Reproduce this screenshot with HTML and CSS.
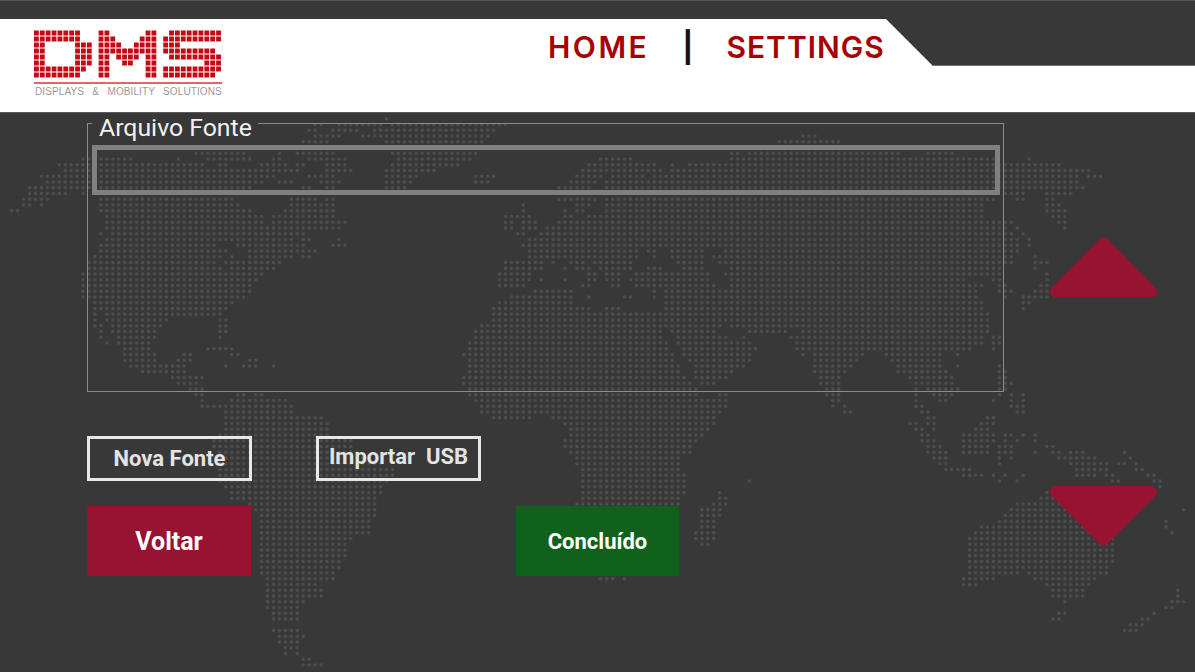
FILE: index.html
```html
<!DOCTYPE html>
<html lang="en">
<head>
  <meta charset="UTF-8" />
  <meta name="viewport" content="width=device-width, initial-scale=1.0" />
  <title>Arquivo Fonte - DMS</title>
  <link rel="stylesheet" href="styles.css">
</head>
<body>

  <!-- Header -->
  <header class="header">
    <div class="logo">
      <svg class="logo-mark" viewBox="0 0 32 8" preserveAspectRatio="none" aria-label="DMS">
        <path d="M0 .5H8M11 .5H13M19 .5H21M23 .5H32
                 M0 1.5H8M11 1.5H14M18 1.5H21M22 1.5H32
                 M0 2.5H2M7 2.5H10M11 2.5H15M17 2.5H21M22 2.5H25
                 M0 3.5H2M7 3.5H10M11 3.5H13M13 3.5H16M16 3.5H19M19 3.5H21M22 3.5H31
                 M0 4.5H2M7 4.5H10M11 4.5H13M14 4.5H18M19 4.5H21M23 4.5H32
                 M0 5.5H2M7 5.5H10M11 5.5H13M15 5.5H17M19 5.5H21M29 5.5H32
                 M0 6.5H9M11 6.5H13M19 6.5H21M22 6.5H32
                 M0 7.5H8M11 7.5H13M19 7.5H21M22 7.5H31"/>
      </svg>
      <div class="logo-text">DISPLAYS  &amp;  MOBILITY  SOLUTIONS</div>
    </div>
    <nav class="navbar">
      <a class="nav-home" href="#">HOME</a>
      <span class="nav-sep">|</span>
      <a href="#">SETTINGS</a>
    </nav>
    <div class="notch"></div>
  </header>

  <!-- Page -->
  <main class="page">

    <!-- Dotted world map, one subpath per run of dots, in grid units -->
    <svg class="world-map" width="1195" height="560" viewBox="0 0 1195 560">
      <g transform="translate(11.67 6.7) scale(5.95 5.75)">
        <path d="M63 0h.1
M51 1H52.1M55 1H62.1M64 1H83.1
M50 2H51.1M54 2H58.1M61 2H81.1
M51 3H55.1M59 3H80.1M133 3H135.1
M49 4H53.1M63 4H79.1M129 4H139.1
M31 6H39.1M45 6h.1M48 6H54.1M64 6H78.1M121 6H122.1M124 6H149.1M154 6H158.1
M12 7H20.1M28 7h.1M33 7H40.1M44 7H45.1M50 7H56.1M65 7H77.1M99 7H104.1M121 7H165.1M171 7h.1
M8 8H32.1M35 8H36.1M42 8H46.1M48 8H49.1M53 8H56.1M64 8H75.1M97 8H108.1M111 8h.1M114 8H176.1
M9 9H48.1M53 9H57.1M63 9H71.1M96 9H109.1M111 9H181.1
M5 10H44.1M50 10H54.1M63 10H68.1M78 10H81.1M95 10H99.1M101 10H106.1M108 10H179.1M181 10H183.1
M6 11H42.1M45 11H47.1M52 11H55.1M63 11H67.1M78 11H80.1M94 11H98.1M100 11H179.1
M3 12H40.1M49 12H50.1M53 12H54.1M63 12H66.1M92 12H97.1M100 12H180.1
M3 13H9.1M12 13h.1M167 13H170.1M174 13H178.1
M2 14H6.1M15 14H37.1M47 14H51.1M53 14H54.1M92 14H98.1M100 14H165.1M169 14H170.1M174 14H175.1
M2 15H3.1M5 15h.1M15 15H38.1M47 15H54.1M86 15h.1M95 15H97.1M100 15H163.1M174 15H176.1
M0 16H1.1M15 16H40.1M46 16H54.1M86 16h.1M93 16h.1M95 16H96.1M100 16H163.1M174 16H177.1
M16 17H42.1M44 17H54.1M83 17H87.1M93 17H94.1M97 17H163.1M175 17H177.1
M16 18H42.1M44 18H56.1M83 18H84.1M86 18H88.1M92 18H168.1M176 18H177.1
M16 19H55.1M83 19H84.1M86 19H88.1M90 19H167.1M169 19h.1M177 19h.1
M15 20h.1M17 20H49.1M85 20H86.1M89 20H168.1M170 20h.1
M16 21H47.1M49 21H50.1M55 21h.1M87 21H169.1M171 21h.1
M15 22H34.1M38 22H49.1M54 22H56.1M86 22H169.1M171 22h.1
M15 23H36.1M40 23H51.1M87 23H105.1M107 23H108.1M111 23H116.1M120 23H169.1
M14 24H35.1M37 24h.1M40 24H47.1M49 24H50.1M87 24H105.1M108 24h.1M111 24H116.1M118 24H168.1M172 24h.1
M13 25H34.1M36 25H45.1M83 25H89.1M91 25h.1M94 25H96.1M98 25H104.1M112 25H116.1M119 25H168.1M172 25H174.1
M13 26H35.1M37 26H44.1M83 26H89.1M93 26h.1M95 26H97.1M99 26H104.1M107 26H109.1M113 26H116.1M121 26H166.1M172 26h.1
M12 27H42.1M82 27H87.1M97 27H98.1M100 27H102.1M105 27H117.1M120 27H166.1M174 27h.1
M12 28H41.1M82 28H87.1M89 28h.1M93 28h.1M97 28H98.1M100 28H102.1M104 28H117.1M121 28H160.1M165 28H166.1M174 28h.1
M12 29H40.1M82 29H86.1M96 29H97.1M101 29H102.1M105 29H118.1M121 29H163.1M166 29H167.1M173 29H174.1
M12 30H40.1M88 30H94.1M108 30h.1M110 30H162.1M166 30H168.1M172 30H174.1
M12 31H39.1M84 31H94.1M97 31h.1M103 31H104.1M108 31h.1M110 31H162.1M167 31h.1M170 31H174.1
M14 32H37.1M82 32H94.1M110 32H163.1M170 32H171.1
M14 33H36.1M81 33H97.1M100 33H102.1M110 33H163.1M170 33h.1
M14 34h.1M16 34H35.1M81 34H164.1
M14 35h.1M16 35H26.1M35 35H36.1M81 35H164.1
M14 36H15.1M17 36H25.1M35 36H36.1M79 36H119.1M121 36H164.1
M15 37h.1M17 37H24.1M35 37H36.1M78 37H109.1M111 37H118.1M124 37H130.1M133 37H164.1
M15 38h.1M18 38H24.1M35 38h.1M78 38H109.1M112 38H120.1M123 38h.1M131 38H163.1M165 38H166.1
M16 39h.1M18 39H23.1M77 39H110.1M112 39H124.1M132 39H163.1M165 39H166.1
M19 40H23.1M33 40H37.1M77 40H110.1M113 40H125.1M132 40H161.1M165 40h.1
M19 41H24.1M29 41H30.1M37 41H38.1M76 41H111.1M113 41H124.1M133 41h.1M135 41H143.1M147 41H156.1M159 41h.1
M19 42H24.1M28 42H30.1M40 42H41.1M77 42H111.1M114 42H124.1M135 42H142.1M148 42H156.1
M20 43H29.1M36 43h.1M39 43H41.1M44 43h.1M77 43H112.1M115 43H123.1M135 43H141.1M149 43H156.1M159 43h.1M166 43h.1
M22 44H29.1M77 44H112.1M115 44H121.1M135 44H140.1M149 44H157.1M166 44H167.1
M27 45H32.1M76 45H113.1M115 45H120.1M136 45H139.1M151 45H158.1M166 45H167.1
M28 46H31.1M76 46H114.1M116 46H118.1M136 46H139.1M152 46H158.1M166 46H168.1
M30 47H32.1M77 47H115.1M137 47H139.1M152 47h.1M154 47H159.1M166 47H167.1
M31 48H32.1M38 48H39.1M41 48H42.1M77 48H115.1M119 48H120.1M137 48H139.1M152 48h.1M155 48H158.1M166 48h.1M168 48h.1M170 48h.1
M32 49h.1M37 49H46.1M78 49H120.1M138 49H139.1M152 49h.1M156 49H157.1M165 49h.1M168 49h.1M170 49h.1
M32 50H47.1M79 50H120.1M138 50h.1M140 50h.1M152 50H153.1M168 50H170.1
M36 51H47.1M79 51H119.1M140 51H141.1M153 51H154.1M169 51H170.1
M36 52H52.1M81 52H87.1M91 52H118.1M154 52H155.1M164 52H165.1
M36 53H53.1M93 53H118.1M151 53H152.1M154 53H155.1M163 53H165.1
M36 54H53.1M94 54H117.1M152 54H153.1M155 54h.1M162 54H164.1
M35 55H53.1M94 55H116.1M153 55H154.1M160 55H165.1M167 55H168.1M170 55h.1M172 55h.1
M34 56H57.1M93 56H115.1M153 56H155.1M160 56H165.1M167 56h.1M169 56h.1M172 56h.1
M34 57H57.1M93 57H114.1M154 57H156.1M160 57H164.1M166 57H168.1M174 57H175.1
M35 58H58.1M94 58H114.1M154 58H157.1M160 58H164.1M166 58H168.1M172 58h.1M175 58H176.1M178 58H180.1M187 58h.1
M35 59H60.1M95 59H112.1M155 59H157.1M166 59h.1M168 59h.1M176 59H182.1M188 59h.1
M35 60H62.1M95 60H112.1M156 60H157.1M166 60h.1M178 60H184.1M186 60H187.1M189 60h.1
M35 61H64.1M96 61H112.1M157 61H161.1M179 61H184.1M189 61H190.1
M35 62H64.1M96 62H113.1M160 62H163.1M165 62h.1M167 62h.1M170 62h.1M179 62H182.1M184 62H185.1M191 62H192.1
M35 63H63.1M96 63H113.1M124 63h.1M166 63h.1M169 63h.1M185 63H186.1M192 63H193.1
M36 64H62.1M96 64H113.1M193 64h.1
M37 65H62.1M96 65H113.1M119 65h.1M174 65h.1
M37 66H61.1M96 66H112.1M119 66H120.1M173 66H176.1
M40 67H61.1M95 67H112.1M118 67H120.1M169 67H178.1
M41 68H61.1M116 68H119.1M168 68H179.1M197 68h.1
M42 69H61.1M116 69H119.1M167 69H180.1
M42 70H60.1M116 70H118.1M166 70H181.1M194 70h.1
M42 71H60.1M116 71H118.1M163 71H182.1M194 71h.1
M42 72H60.1M115 72H118.1M162 72H183.1M195 72h.1
M42 73H57.1M115 73H118.1M161 73H185.1
M42 74H56.1M116 74H117.1M161 74H185.1
M42 75H56.1M161 75H185.1
M42 76H56.1M161 76H185.1
M42 77H55.1M161 77H185.1
M42 78H55.1M161 78H184.1
M42 79H54.1M161 79H169.1M171 79H184.1
M43 80H54.1M99 80H101.1M103 80h.1M160 80H165.1M172 80H182.1
M43 81H51.1M160 81H162.1M174 81H181.1
M43 82H52.1M175 82H180.1M196 82h.1
M43 83H52.1M175 83H180.1M196 83h.1
M43 84H49.1M177 84h.1M195 84H197.1
M43 85H48.1M194 85H195.1
M44 86H48.1M176 86H177.1M192 86h.1
M44 87H48.1M175 87H176.1M190 87H191.1
M188 88H190.1
M44 89H48.1M187 89H189.1
M45 90H49.1
M45 91H48.1
M46 92H48.1
M46 93h.1M48 93h.1
M49 94H50.1
M49 95H52.1"/>
      </g>
    </svg>

    <div class="panel">
      <fieldset class="source-box">
        <legend>Arquivo Fonte</legend>
        <div class="source-row"></div>
      </fieldset>

      <div class="btn-row btn-row-small">
        <button class="btn-outline">Nova Fonte</button>
        <button class="btn-outline btn-raised">Importar  USB</button>
      </div>

      <div class="btn-row btn-row-big">
        <button class="btn-back">Voltar</button>
        <button class="btn-done">Concluído</button>
      </div>
    </div>

    <div class="arrows">
      <svg class="arrow" viewBox="0 0 108 61"><polygon points="53.5,6.6 101,54.6 6,54.6"/></svg>
      <svg class="arrow" viewBox="0 0 108 61"><polygon points="6,6 101,6 53.5,53.5"/></svg>
    </div>
  </main>

</body>
</html>
```

FILE: styles.css
```css
body {
  margin: 0;
  padding: 19px 0 0;
  height: 672px;
  box-sizing: border-box;
  overflow: hidden;
  background-color: #383838;
  border-top: 1px solid #555;
  font-family: Roboto, sans-serif;
}

/* Header */
.header {
  position: relative;
  display: flex;
  height: 93px;
  margin-top: -1px;
  background-color: white;
}
.notch {
  position: absolute;
  top: 0;
  right: 0;
  width: 309px;
  height: 46px;
  background-color: #383838;
  border-bottom: 1px solid #777;
  clip-path: polygon(0 0, 100% 0, 100% 100%, 47px 100%);
}

.logo {
  width: 188px;
  margin: 11px 0 0 34px;
}
.logo-mark {
  display: block;
  width: 188px;
  height: 48px;
}
.logo-mark path {
  fill: none;
  stroke: #c40a14;
  stroke-width: 0.84;
  stroke-dasharray: 0.82 0.18;
}
.logo-text {
  margin-top: 4px;
  padding: 2px 0 0 1px;
  border-top: 2px solid #d86a6a;
  font-family: "Liberation Sans", sans-serif;
  font-size: 10px;
  line-height: 12px;
  letter-spacing: 0.1px;
  word-spacing: 1.3px;
  color: #999;
  white-space: pre;
}

.navbar {
  display: flex;
  align-items: center;
  height: 56px;
  margin-left: 326px;
  font-family: Inter, sans-serif;
  font-size: 30px;
  font-weight: 600;
}
.navbar a {
  color: #a80000;
  text-decoration: none;
  letter-spacing: 1px;
}
.navbar .nav-home {
  letter-spacing: 2.5px;
}
.nav-sep {
  margin: 0 33px;
  color: #111;
  font-weight: 700;
}

/* Page */
.page {
  position: relative;
  display: flex;
  height: 559px;
  border-top: 1px solid #5a5a5a;
}
.world-map {
  position: absolute;
  top: -1px;
  left: 0;
}
.world-map path {
  fill: none;
  stroke: #4d4d4d;
  stroke-width: 0.62;
  stroke-linecap: round;
  stroke-dasharray: 0 1;
}

.panel {
  position: relative;
  width: 916px;
  margin-left: 87px;
}

.source-box {
  box-sizing: border-box;
  width: 916px;
  height: 287px;
  margin: -8px 0 0;
  padding: 3px 3px 0 4px;
  border: 1px solid #8c8c8c;
}
.source-box legend {
  padding: 9px 6px 0 7px;
  font-size: 24.8px;
  line-height: 28px;
  color: #f2f2f2;
}
.source-row {
  box-sizing: border-box;
  width: 908px;
  height: 50px;
  border: 5px solid #808080;
}

.btn-row {
  display: flex;
}
.btn-row button {
  font-family: Roboto, sans-serif;
  font-weight: 700;
  cursor: pointer;
}
.btn-row-small {
  gap: 64px;
  margin-top: 44px;
}
.btn-row-big {
  gap: 265px;
  margin-top: 25px;
}

.btn-outline {
  box-sizing: border-box;
  width: 165px;
  height: 45px;
  padding: 0;
  background: none;
  border: 3px solid #e8e8e8;
  color: #e4e4e4;
  font-size: 22px;
}
.btn-raised {
  padding-bottom: 5px;
  white-space: pre;
}
.btn-back,
.btn-done {
  height: 70px;
  border: none;
  color: white;
}
.btn-back {
  width: 164px;
  padding-top: 2px;
  background-color: #961331;
  font-size: 25px;
}
.btn-done {
  width: 163px;
  background-color: #10611b;
  font-size: 22px;
}

/* Up and down arrows */
.arrows {
  position: relative;
  display: flex;
  flex-direction: column;
  gap: 188px;
  margin: 124px 0 0 47px;
}
.arrow {
  display: block;
  width: 108px;
  height: 61px;
}
.arrow polygon {
  fill: #961331;
  stroke: #961331;
  stroke-width: 12;
  stroke-linejoin: round;
}
```
